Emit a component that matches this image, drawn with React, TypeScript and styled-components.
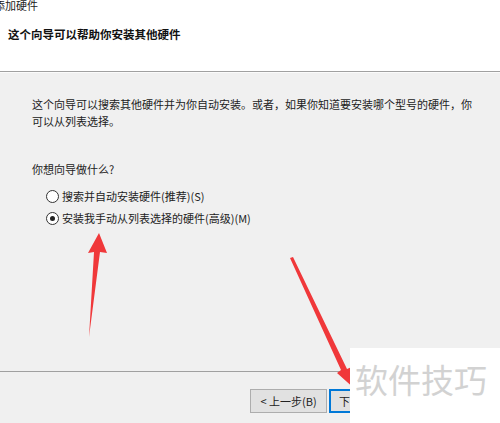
import styled, { createGlobalStyle } from 'styled-components'

const GlobalStyle = createGlobalStyle`
  html, body {
    margin: 0;
    padding: 0;
    background: #f0f0f0;
  }
  body {
    font-family: "Noto Sans CJK SC", "Noto Sans", sans-serif;
    color: #1a1a1a;
  }
`

const Dialog = styled.div`
  position: relative;
  width: 500px;
  height: 423px;
  overflow: hidden;
  display: flex;
  flex-direction: column;
  background: #f0f0f0;
`

const Header = styled.div`
  height: 72px;
  background: #fff;
  border-bottom: 1px solid #a0a0a0;
  box-shadow: 0 1px 0 #fbfbfb;
  box-sizing: border-box;
`

const WindowTitle = styled.div`
  font-size: 11px;
  line-height: 12px;
  margin-left: -6px;
  margin-top: -1px;
  color: #222;
`

const Subtitle = styled.div`
  font-size: 11.5px;
  font-weight: bold;
  margin: 15px 0 0 8px;
  color: #111;
`

const Body = styled.div`
  flex: 1;
  padding: 24px 0 0 32px;
`

const Paragraph = styled.p`
  margin: 0;
  width: 440px;
  font-size: 11px;
  line-height: 17px;
  color: #222;
`

const Question = styled.div`
  margin-top: 31px;
  font-size: 11px;
  color: #222;
`

const Options = styled.div`
  display: flex;
  flex-direction: column;
  gap: 6px;
  margin: 11px 0 0 14px;
`

const Option = styled.label`
  display: flex;
  align-items: center;
  gap: 3px;
  font-size: 11px;
  line-height: 16px;
  color: #222;
`

const Radio = styled.span<{ checked?: boolean }>`
  width: 11px;
  height: 11px;
  border-radius: 50%;
  border: 1px solid #333;
  background: #fff;
  display: flex;
  align-items: center;
  justify-content: center;
  &::after {
    content: '';
    width: 5px;
    height: 5px;
    border-radius: 50%;
    background: ${p => (p.checked ? '#222' : 'transparent')};
  }
`

const Footer = styled.div`
  height: 52px;
  border-top: 1px solid #a0a0a0;
  box-sizing: border-box;
  display: flex;
  justify-content: flex-end;
  align-items: flex-start;
  padding: 17px 7px 0 0;
`

const Button = styled.button<{ primary?: boolean; spaced?: boolean }>`
  width: 77px;
  height: 24px;
  margin-left: ${p => (p.spaced ? '10px' : '2px')};
  font-family: inherit;
  font-size: 11px;
  color: #222;
  background: #e1e1e1;
  border: 1px solid ${p => (p.primary ? '#0078d7' : '#adadad')};
  box-shadow: ${p => (p.primary ? 'inset 0 0 0 1px #0078d7' : 'none')};
  padding: 0;
`

const Overlay = styled.svg`
  position: absolute;
  left: 0;
  top: 0;
  pointer-events: none;
`

const Watermark = styled.div`
  position: absolute;
  left: 350px;
  top: 348px;
  width: 150px;
  height: 75px;
  background: #fff;
  display: flex;
  align-items: flex-start;
  padding: 11px 0 0 5px;
  box-sizing: border-box;
  font-size: 33px;
  line-height: 40px;
  color: #d2d2d2;
  white-space: nowrap;
`

function App() {
  return (
    <Dialog>
      <GlobalStyle />
      <Header>
        <WindowTitle>添加硬件</WindowTitle>
        <Subtitle>这个向导可以帮助你安装其他硬件</Subtitle>
      </Header>
      <Body>
        <Paragraph>
          这个向导可以搜索其他硬件并为你自动安装。或者，如果你知道要安装哪个型号的硬件，你可以从列表选择。
        </Paragraph>
        <Question>你想向导做什么?</Question>
        <Options>
          <Option>
            <Radio />
            搜索并自动安装硬件(推荐)(S)
          </Option>
          <Option>
            <Radio checked />
            安装我手动从列表选择的硬件(高级)(M)
          </Option>
        </Options>
      </Body>
      <Footer>
        <Button>&lt; 上一步(B)</Button>
        <Button primary>下一步(N) &gt;</Button>
        <Button spaced>取消</Button>
      </Footer>
      <Overlay width="500" height="423" viewBox="0 0 500 423">
        <polygon points="99,233 107,253 100,252 89,337 94,252 88,253" fill="#f0383a" />
        <polygon points="290,258 341,370 337,373 356,390 354,366 347,369 293,257" fill="#f0383a" />
      </Overlay>
      <Watermark>软件技巧</Watermark>
    </Dialog>
  )
}

export default App
